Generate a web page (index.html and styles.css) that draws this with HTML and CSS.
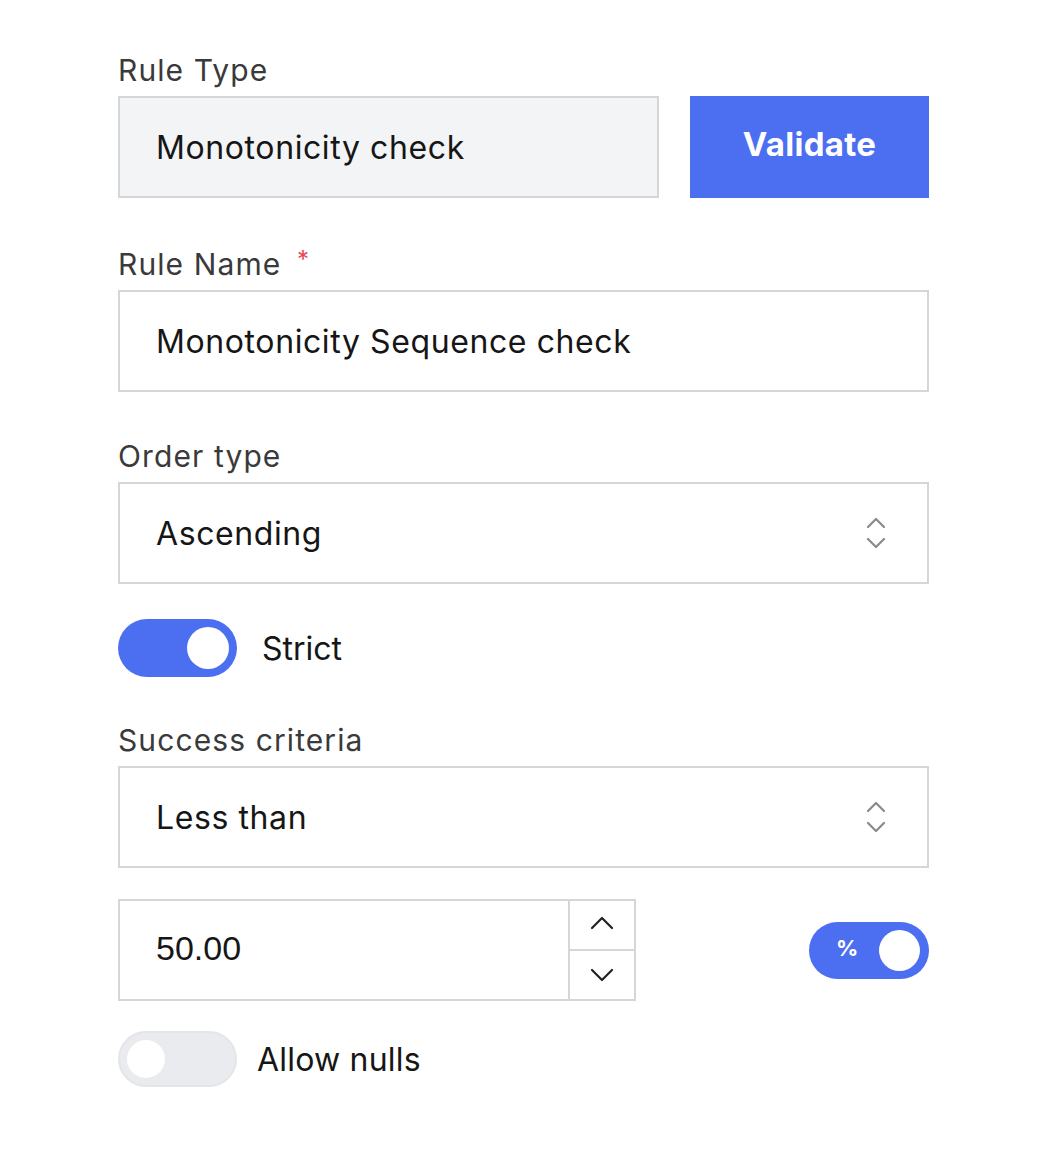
FILE: index.html
```html
<!DOCTYPE html>
<html lang="en">
<head>
<meta charset="utf-8">
<title>Rule form</title>
<link rel="stylesheet" href="styles.css">
</head>
<body>
<form class="form">
  <div class="field f-type">
    <label class="label">Rule Type</label>
    <div class="type-row">
      <div class="input readonly">Monotonicity check</div>
      <button type="button" class="btn">Validate</button>
    </div>
  </div>

  <div class="field f-name">
    <label class="label">Rule Name <span class="req">*</span></label>
    <div class="input">Monotonicity Sequence check</div>
  </div>

  <div class="field f-order">
    <label class="label">Order type</label>
    <div class="input select">
      <span>Ascending</span>
      <svg class="updown" width="22" height="34" viewBox="0 0 22 34" fill="none" stroke="#8a8a8a" stroke-width="2.2" stroke-linecap="round" stroke-linejoin="round"><path d="M3 11 L11 3 L19 11"/><path d="M3 23 L11 31 L19 23"/></svg>
    </div>
  </div>

  <div class="switch-row f-strict">
    <span class="toggle on"><span class="knob"></span></span>
    <span class="switch-text inter">Strict</span>
  </div>

  <div class="field f-crit">
    <label class="label">Success criteria</label>
    <div class="input select">
      <span>Less than</span>
      <svg class="updown" width="22" height="34" viewBox="0 0 22 34" fill="none" stroke="#8a8a8a" stroke-width="2.2" stroke-linecap="round" stroke-linejoin="round"><path d="M3 11 L11 3 L19 11"/><path d="M3 23 L11 31 L19 23"/></svg>
    </div>
  </div>

  <div class="num-row">
    <div class="number">
      <span class="num-val">50.00</span>
      <div class="spin">
        <span class="spin-btn up"><svg width="24" height="14" viewBox="0 0 24 14" fill="none" stroke="#222" stroke-width="2.2" stroke-linecap="round" stroke-linejoin="round"><path d="M2 12 L12 2 L22 12"/></svg></span>
        <span class="spin-btn"><svg width="24" height="14" viewBox="0 0 24 14" fill="none" stroke="#222" stroke-width="2.2" stroke-linecap="round" stroke-linejoin="round"><path d="M2 2 L12 12 L22 2"/></svg></span>
      </div>
    </div>
    <span class="toggle on pct"><span class="pct-sign">%</span><span class="knob"></span></span>
  </div>

  <div class="switch-row f-nulls">
    <span class="toggle off"><span class="knob"></span></span>
    <span class="switch-text nulls">Allow nulls</span>
  </div>
</form>
</body>
</html>
```

FILE: styles.css
```css
* { box-sizing: border-box; }
html, body { margin: 0; padding: 0; background: #fff; }
body {
  font-family: Inter, "Open Sans", sans-serif;
  color: #1c1c1c;
}
.form {
  width: 811px;
  margin-left: 118px;
  padding-top: 50px;
  display: flex;
  flex-direction: column;
}
.field { display: flex; flex-direction: column; }
.label {
  font-size: 30px;
  letter-spacing: 1.1px;
  line-height: 40px;
  height: 40px;
  margin-bottom: 6px;
  color: #3a3a3a;
  font-weight: 400;
}
.req { color: #e5484d; font-size: 24px; vertical-align: top; position: relative; top: -4px; margin-left: 6px; }
.input {
  height: 102px;
  border: 2px solid #d4d6d9;
  background: #fff;
  padding: 0 36px;
  font-size: 32px;
  letter-spacing: 0.6px;
  display: flex;
  align-items: center;
  color: #161616;
}
.input.readonly { background: #f3f4f5; flex: 0 0 541px; }
.type-row { display: flex; gap: 31px; }
.btn {
  flex: 1;
  height: 102px;
  border: 0;
  background: #4c6ef1;
  color: #fff;
  font-family: Inter, sans-serif;
  font-size: 33px;
  font-weight: 700;
  letter-spacing: 0.3px;
  padding: 0 0 6px;
}
.f-name { margin-top: 46px; }
.f-order { margin-top: 44px; }
.select { justify-content: space-between; padding-right: 40px; }
.updown { display: block; }
.switch-row { display: flex; align-items: center; }
.f-strict { margin-top: 35px; gap: 25px; }
.f-crit { margin-top: 43px; }
.f-nulls { margin-top: 30px; gap: 20px; }
.toggle {
  position: relative;
  display: inline-block;
  width: 119px;
  height: 58px;
  border-radius: 29px;
  background: #4c6ef1;
  flex: 0 0 auto;
}
.toggle .knob {
  position: absolute;
  top: 8px;
  right: 8px;
  width: 42px;
  height: 42px;
  border-radius: 50%;
  background: #fff;
}
.toggle.off { background: #e9ebee; border: 2px solid #e3e5e8; height: 56px; }
.toggle.off .knob { left: 7px; right: auto; top: 7px; width: 38px; height: 38px; }
.switch-text { font-size: 32px; color: #161616; }
.nulls { letter-spacing: 0.2px; }
.inter { font-family: Inter, sans-serif; }
.num-row {
  margin-top: 31px;
  display: flex;
  align-items: center;
  justify-content: space-between;
}
.number {
  width: 518px;
  height: 102px;
  border: 2px solid #d4d6d9;
  display: flex;
}
.num-val {
  flex: 1;
  display: flex;
  align-items: center;
  padding-left: 36px;
  padding-bottom: 4px;
  font-family: "Liberation Sans", Arial, sans-serif;
  font-size: 34px;
  color: #161616;
}
.spin {
  width: 66px;
  border-left: 2px solid #d4d6d9;
  display: flex;
  flex-direction: column;
}
.spin-btn {
  flex: 1 1 0;
  display: flex;
  align-items: center;
  justify-content: center;
}
.spin-btn.up svg { margin-bottom: 5px; }
.spin-btn + .spin-btn { border-top: 2px solid #d4d6d9; }
.pct { width: 120px; height: 57px; }
.pct .knob { top: 8px; right: 9px; width: 41px; height: 41px; }
.pct-sign {
  position: absolute;
  left: 27px;
  top: 13px;
  color: #fff;
  font-size: 22px;
  font-weight: 700;
  font-family: Inter, sans-serif;
}
```
